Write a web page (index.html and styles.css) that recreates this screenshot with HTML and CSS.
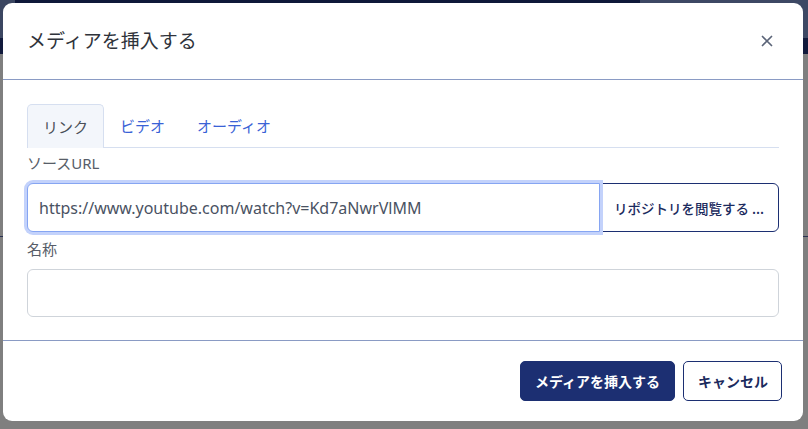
FILE: index.html
```html
<!DOCTYPE html>
<html lang="ja">
<head>
<meta charset="utf-8">
<title>メディアを挿入する</title>
<link rel="stylesheet" href="styles.css">
</head>
<body>
<div class="page">
  <div class="topbar"><div class="topbar-left"></div><div class="topbar-mid"></div><div class="topbar-right"></div></div>
  <div class="subbar"></div>
  <div class="content"><div class="content-line"></div></div>
</div>

<div class="modal" role="dialog">
  <div class="modal-header">
    <h1 class="modal-title">メディアを挿入する</h1>
    <button class="close" aria-label="閉じる">
      <svg width="12" height="12" viewBox="0 0 12 12"><path d="M1.5 1.5 L10.5 10.5 M10.5 1.5 L1.5 10.5" stroke="#5b6478" stroke-width="1.7" stroke-linecap="round" fill="none"/></svg>
    </button>
  </div>
  <div class="modal-body">
    <div class="tabs">
      <div class="tab active">リンク</div>
      <div class="tab">ビデオ</div>
      <div class="tab">オーディオ</div>
    </div>
    <label class="field-label first">ソースURL</label>
    <div class="input-group">
      <div class="input focused">https://www.youtube.com/watch?v=Kd7aNwrVlMM</div>
      <button class="btn-browse">リポジトリを閲覧する ...</button>
    </div>
    <label class="field-label second">名称</label>
    <div class="input plain"></div>
  </div>
  <div class="modal-footer">
    <button class="btn btn-primary">メディアを挿入する</button>
    <button class="btn btn-outline">キャンセル</button>
  </div>
</div>
</body>
</html>
```

FILE: styles.css
```css
html, body {
  margin: 0;
  padding: 0;
  background: #7f7f7f;
  font-family: "Noto Sans", "Noto Sans CJK JP", sans-serif;
}

.page {
  width: 808px;
  height: 429px;
  overflow: hidden;
}

.topbar {
  height: 38px;
  display: flex;
}
.topbar-left { width: 15px; background: #3b4661; }
.topbar-mid { width: 625px; background: #0f1839; }
.topbar-right { flex: 1; background: #3d4864; }

.subbar {
  height: 16px;
  background: #111a3c;
}

.content {
  height: 375px;
  background: #7f7f7f;
  display: flex;
  flex-direction: column;
}
.content-line {
  margin-top: 182px;
  height: 1px;
  background: #2a3152;
}

.modal {
  position: absolute;
  top: 3px;
  left: 3px;
  width: 800px;
  height: 418px;
  background: #ffffff;
  border-radius: 9px;
  display: flex;
  flex-direction: column;
  overflow: hidden;
}

.modal-header {
  height: 76px;
  display: flex;
  align-items: center;
  justify-content: space-between;
  padding: 0 24px;
  border-bottom: 1px solid #8a9bc4;
}

.modal-title {
  margin: 0 0 3px 0;
  font-size: 19px;
  font-weight: 400;
  color: #2f333b;
  font-family: "Noto Sans CJK JP", "Noto Sans", sans-serif;
}

.close {
  border: 0;
  background: transparent;
  padding: 0;
  width: 12px;
  height: 12px;
  margin-right: 6px;
  display: flex;
}

.modal-body {
  padding: 24px 24px 23px 24px;
  border-bottom: 1px solid #8a9bc4;
}

.tabs {
  display: flex;
  height: 43px;
  border-bottom: 1px solid #d6dff0;
}

.tab {
  padding: 0 16px;
  display: flex;
  align-items: center;
  font-size: 15px;
  color: #3a62d6;
  font-family: "Noto Sans CJK JP", sans-serif;
  white-space: nowrap;
}
.tab.active {
  background: #f3f6fb;
  border: 1px solid #d6dff0;
  border-bottom: 0;
  border-radius: 5px 5px 0 0;
  color: #4a4f58;
  margin-bottom: -1px;
  height: 44px;
  box-sizing: border-box;
  padding: 0 15px;
}

.field-label {
  display: block;
  font-size: 15px;
  line-height: 22px;
  color: #575d68;
}
.field-label.first { margin-top: 4px; margin-bottom: 9px; }
.field-label.second { margin-top: 6px; margin-bottom: 9px; }

.input-group {
  display: flex;
  height: 49px;
}

.input {
  box-sizing: border-box;
  height: 48px;
  border: 1px solid #cfd4da;
  border-radius: 6px;
  background: #fff;
  font-size: 16px;
  color: #4a5262;
  padding: 0 11px;
  display: flex;
  align-items: center;
}

.input.focused {
  flex: 1;
  height: 49px;
  border-color: #86a5f2;
  border-radius: 6px 0 0 6px;
  box-shadow: 0 0 0 3px #c3d2fb;
  position: relative;
  z-index: 1;
}

.btn-browse {
  box-sizing: border-box;
  height: 49px;
  width: 180px;
  border: 1px solid #1c2f72;
  border-radius: 0 6px 6px 0;
  background: #fff;
  color: #1c2b5e;
  font-family: "Noto Sans CJK JP", "Noto Sans", sans-serif;
  font-size: 13.5px;
  font-weight: 500;
  padding: 0 8px;
  margin-left: -1px;
  white-space: nowrap;
}

.modal-footer {
  flex: 1;
  display: flex;
  justify-content: flex-end;
  align-items: flex-start;
  gap: 8px;
  padding: 20px 21px 0 0;
}

.btn {
  box-sizing: border-box;
  height: 40px;
  padding: 0 14px;
  border-radius: 5px;
  font-family: "Noto Sans CJK JP", "Noto Sans", sans-serif;
  font-size: 14px;
  font-weight: 600;
  border: 1px solid #1c2f72;
  white-space: nowrap;
}

.btn-primary {
  background: #1c2f72;
  color: #ffffff;
  width: 155px;
}

.btn-outline {
  background: #ffffff;
  color: #1c2b5e;
  width: 99px;
}
```
